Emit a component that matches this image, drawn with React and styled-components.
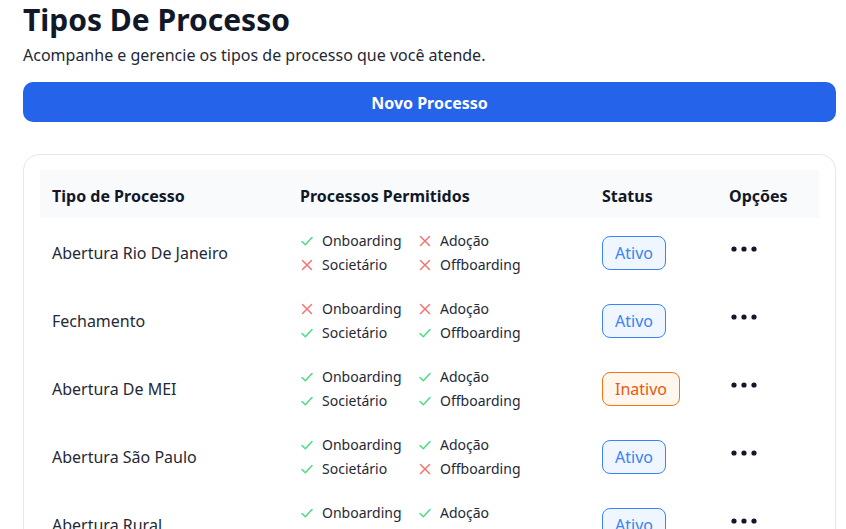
import React from 'react';
import styled, { createGlobalStyle } from 'styled-components';

const GlobalStyle = createGlobalStyle`
  body {
    margin: 0;
    background: #ffffff;
    font-family: "Noto Sans", "Open Sans", sans-serif;
    color: #111827;
  }
`;

const Page = styled.main`
  padding: 2px 10px 24px 23px;
`;

const Title = styled.h1`
  margin: 0;
  font-size: 30px;
  line-height: 36px;
  font-weight: 700;
  color: #111827;
`;

const Subtitle = styled.p`
  margin: 5px 0 0;
  font-size: 16px;
  line-height: 24px;
  color: #1f2937;
`;

const PrimaryButton = styled.button`
  display: block;
  width: 100%;
  height: 40px;
  margin-top: 15px;
  padding-top: 2px;
  border: none;
  border-radius: 10px;
  background: #2563eb;
  color: #fff;
  font-family: inherit;
  font-size: 16px;
  font-weight: 700;
  cursor: pointer;
`;

const Card = styled.section`
  margin-top: 32px;
  border: 1px solid #e5e7eb;
  border-radius: 16px;
  padding: 15px 16px 16px;
`;

const Row = styled.div`
  display: grid;
  grid-template-columns: 248px 302px 127px 1fr;
  align-items: center;
  height: ${(p) => (p.header ? '48px' : '68px')};
  padding-top: ${(p) => (p.header ? '3px' : '2px')};
  box-sizing: border-box;
  background: ${(p) => (p.header ? '#f9fafb' : 'transparent')};
`;

const HeadCell = styled.div`
  padding: 0 12px;
  font-size: 16px;
  font-weight: 700;
  color: #111827;
`;

const Cell = styled.div`
  padding: 0 12px;
  font-size: 16px;
  color: #1f2937;
`;

const PermGrid = styled.div`
  display: grid;
  grid-template-columns: 118px auto;
  font-size: 14px;
  line-height: 24px;
  color: #1f2937;
`;

const Perm = styled.span`
  display: flex;
  align-items: center;
  gap: 9px;
  margin-left: 1px;

  svg {
    flex-shrink: 0;
    color: ${(p) => (p.ok ? '#4ade80' : '#f87171')};
  }
`;

const Badge = styled.span`
  display: inline-block;
  padding: 4px 12px;
  border-radius: 8px;
  font-size: 16px;
  line-height: 24px;
  border: 1px solid ${(p) => (p.active ? '#3b82f6' : '#f97316')};
  background: ${(p) => (p.active ? '#eff6ff' : '#fff7ed')};
  color: ${(p) => (p.active ? '#3b82f6' : '#ea580c')};
`;

const MoreButton = styled.button`
  display: flex;
  align-items: center;
  padding: 0;
  margin: 0 0 8px 2px;
  border: none;
  background: none;
  color: #111827;
  cursor: pointer;
`;

const Dots = () => (
  <svg width="26" height="6" viewBox="0 0 26 6">
    <circle cx="3" cy="3" r="2.6" fill="currentColor" />
    <circle cx="13" cy="3" r="2.6" fill="currentColor" />
    <circle cx="23" cy="3" r="2.6" fill="currentColor" />
  </svg>
);

const CheckMark = () => (
  <svg width="12" height="12" viewBox="0 0 12 12" fill="none" stroke="currentColor" strokeWidth="1.5" strokeLinecap="round" strokeLinejoin="round">
    <polyline points="1,6.5 4.3,9.8 11,2.5" />
  </svg>
);

const CrossMark = () => (
  <svg width="12" height="12" viewBox="0 0 12 12" fill="none" stroke="currentColor" strokeWidth="1.5" strokeLinecap="round">
    <line x1="1.5" y1="1.5" x2="10.5" y2="10.5" />
    <line x1="10.5" y1="1.5" x2="1.5" y2="10.5" />
  </svg>
);

const rows = [
  { name: 'Abertura Rio De Janeiro', perms: [true, false, false, false], active: true },
  { name: 'Fechamento', perms: [false, false, true, true], active: true },
  { name: 'Abertura De MEI', perms: [true, true, true, true], active: false },
  { name: 'Abertura São Paulo', perms: [true, true, true, false], active: true },
  { name: 'Abertura Rural', perms: [true, true, true, true], active: true },
  { name: 'Abertura Minas Gerais', perms: [true, false, true, false], active: true },
];

const labels = ['Onboarding', 'Adoção', 'Societário', 'Offboarding'];

const App = () => (
  <>
    <GlobalStyle />
    <Page>
      <Title>Tipos De Processo</Title>
      <Subtitle>Acompanhe e gerencie os tipos de processo que você atende.</Subtitle>
      <PrimaryButton>Novo Processo</PrimaryButton>

      <Card>
        <Row header>
          <HeadCell>Tipo de Processo</HeadCell>
          <HeadCell>Processos Permitidos</HeadCell>
          <HeadCell>Status</HeadCell>
          <HeadCell>Opções</HeadCell>
        </Row>
        {rows.map((r) => (
          <Row key={r.name}>
            <Cell>{r.name}</Cell>
            <Cell>
              <PermGrid>
                {labels.map((l, i) => (
                  <Perm key={l} ok={r.perms[i]}>
                    {r.perms[i] ? <CheckMark /> : <CrossMark />}
                    {l}
                  </Perm>
                ))}
              </PermGrid>
            </Cell>
            <Cell>
              <Badge active={r.active}>{r.active ? 'Ativo' : 'Inativo'}</Badge>
            </Cell>
            <Cell>
              <MoreButton aria-label="Opções">
                <Dots />
              </MoreButton>
            </Cell>
          </Row>
        ))}
      </Card>
    </Page>
  </>
);

export default App;
